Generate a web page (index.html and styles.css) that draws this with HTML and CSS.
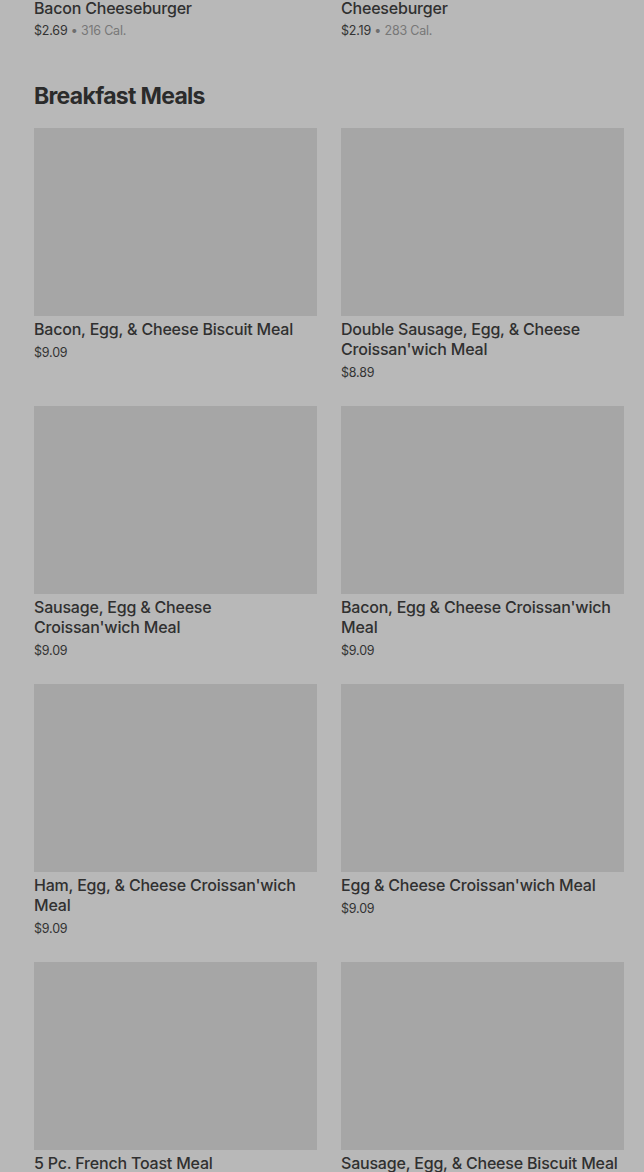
FILE: index.html
```html
<!DOCTYPE html>
<html lang="en">
<head>
  <meta charset="UTF-8">
  <meta name="viewport" content="width=device-width, initial-scale=1.0">
  <title>Menu</title>
  <link rel="stylesheet" href="styles.css">
</head>
<body>
  <div class="menu">
    <div class="grid top-row">
      <div class="item">
        <div class="item-name">Bacon Cheeseburger</div>
        <div class="item-meta"><span class="price">$2.69</span> • <span class="cal">316 Cal.</span></div>
      </div>
      <div class="item">
        <div class="item-name">Cheeseburger</div>
        <div class="item-meta"><span class="price">$2.19</span> • <span class="cal">283 Cal.</span></div>
      </div>
    </div>

    <section class="category">
      <h2>Breakfast Meals</h2>
      <div class="grid">
        <div class="item">
          <div class="thumb"></div>
          <div class="item-name">Bacon, Egg, &amp; Cheese Biscuit Meal</div>
          <div class="item-meta"><span class="price">$9.09</span></div>
        </div>
        <div class="item">
          <div class="thumb"></div>
          <div class="item-name">Double Sausage, Egg, &amp; Cheese Croissan'wich Meal</div>
          <div class="item-meta"><span class="price">$8.89</span></div>
        </div>
        <div class="item">
          <div class="thumb"></div>
          <div class="item-name">Sausage, Egg &amp; Cheese Croissan'wich Meal</div>
          <div class="item-meta"><span class="price">$9.09</span></div>
        </div>
        <div class="item">
          <div class="thumb"></div>
          <div class="item-name">Bacon, Egg &amp; Cheese Croissan'wich Meal</div>
          <div class="item-meta"><span class="price">$9.09</span></div>
        </div>
        <div class="item">
          <div class="thumb"></div>
          <div class="item-name">Ham, Egg, &amp; Cheese Croissan'wich Meal</div>
          <div class="item-meta"><span class="price">$9.09</span></div>
        </div>
        <div class="item">
          <div class="thumb"></div>
          <div class="item-name">Egg &amp; Cheese Croissan'wich Meal</div>
          <div class="item-meta"><span class="price">$9.09</span></div>
        </div>
        <div class="item">
          <div class="thumb"></div>
          <div class="item-name">5 Pc. French Toast Meal</div>
        </div>
        <div class="item">
          <div class="thumb"></div>
          <div class="item-name">Sausage, Egg, &amp; Cheese Biscuit Meal</div>
        </div>
      </div>
    </section>
  </div>
</body>
</html>
```

FILE: styles.css
```css
body {
  margin: 0;
  background: #b8b8b8;
  font-family: 'Inter', 'Liberation Sans', sans-serif;
  color: #303030;
  overflow: hidden;
}
.menu {
  padding: 0 20px 0 34px;
}
.grid {
  display: grid;
  grid-template-columns: 283px 283px;
  column-gap: 24px;
  row-gap: 23px;
}
.top-row {
  margin-top: -2px;
}
.item-name {
  font-size: 16px;
  font-weight: 500;
  line-height: 20px;
  letter-spacing: -0.2px;
  margin-top: 3px;
}
.top-row .item-name {
  margin-top: 0;
}
.item-meta {
  font-size: 12.5px;
  line-height: 20px;
  margin-top: 4px;
  letter-spacing: -0.2px;
  color: #6e6e6e;
}
.top-row .item-meta {
  margin-top: 3px;
}
.item-meta .price {
  color: #333;
}
.item-meta .cal {
  color: #777;
}
.category h2 {
  font-size: 23px;
  font-weight: 700;
  margin: 39px 0 16px;
  line-height: 32px;
  letter-spacing: -0.7px;
  color: #2b2b2b;
}
.thumb {
  height: 188px;
  background: #a6a6a6;
}
```
